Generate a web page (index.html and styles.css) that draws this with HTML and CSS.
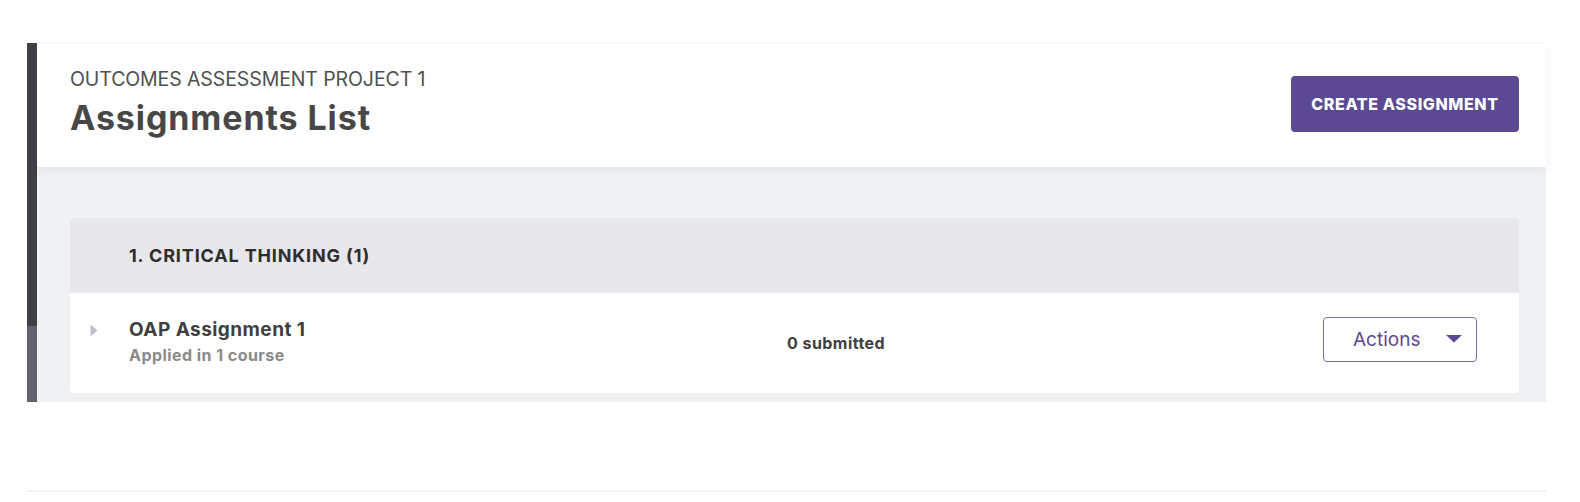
FILE: index.html
```html
<!DOCTYPE html>
<html lang="en">
<head>
<meta charset="utf-8">
<title>Assignments List</title>
<link rel="stylesheet" href="styles.css">
</head>
<body>
<div class="frame">
  <div class="rail">
    <div class="rail-top"></div>
    <div class="rail-bottom"></div>
  </div>
  <div class="main">
    <header class="page-header">
      <div class="titles">
        <div class="eyebrow">OUTCOMES ASSESSMENT PROJECT 1</div>
        <h1 class="title">Assignments List</h1>
      </div>
      <button class="btn-primary">CREATE ASSIGNMENT</button>
    </header>
    <section class="content">
      <div class="group">
        <div class="group-head">1. CRITICAL THINKING (1)</div>
        <div class="row">
          <div class="caret">
            <svg width="8" height="13" viewBox="0 0 8 13"><path d="M0.5 0.5 L7.5 6.5 L0.5 12.5 Z" fill="#b9c1cc"/></svg>
          </div>
          <div class="row-main">
            <div class="row-title">OAP Assignment 1</div>
            <div class="row-sub">Applied in 1 course</div>
          </div>
          <div class="row-count">0 submitted</div>
          <div class="row-actions">
            <button class="btn-actions">
              <span>Actions</span>
              <svg width="16" height="8" viewBox="0 0 16 8"><path d="M0 0 H16 L8 7.5 Z" fill="#5b4a91"/></svg>
            </button>
          </div>
        </div>
      </div>
    </section>
  </div>
</div>
<div class="footer-line"></div>
</body>
</html>
```

FILE: styles.css
```css
* { box-sizing: border-box; }

html, body {
  margin: 0;
  padding: 0;
  background: #ffffff;
  font-family: "Inter", "Noto Sans", "Liberation Sans", sans-serif;
  color: #444;
}

body {
  padding: 43px 34px 0 27px;
}

.frame {
  display: flex;
  height: 359px;
}

.rail {
  width: 10px;
  flex: none;
  display: flex;
  flex-direction: column;
}

.rail-top {
  height: 283px;
  background: #404046;
}

.rail-bottom {
  flex: 1;
  background: #62626f;
}

.main {
  flex: 1;
  display: flex;
  flex-direction: column;
  background: #f0f1f3;
}

.page-header {
  position: relative;
  z-index: 1;
  height: 124px;
  background: #ffffff;
  border-top: 1px solid #f4f4f5;
  box-shadow: 0 3px 10px rgba(0, 0, 0, 0.06);
  display: flex;
  align-items: center;
  justify-content: space-between;
  padding: 0 27px 0 33px;
}

.titles {
  display: flex;
  flex-direction: column;
  margin-top: -6px;
}

.eyebrow {
  font-size: 19.5px;
  line-height: 22px;
  color: #505050;
  letter-spacing: -0.1px;
}

.title {
  margin: 9px 0 0;
  font-size: 34px;
  line-height: 38px;
  font-weight: 700;
  letter-spacing: 0.9px;
  color: #474747;
}

.btn-primary {
  width: 228px;
  height: 56px;
  margin-top: -4px;
  background: #5b4a91;
  color: #ffffff;
  border: none;
  border-radius: 4px;
  font-family: "Inter", "Liberation Sans", sans-serif;
  font-size: 16px;
  font-weight: 800;
  letter-spacing: 0.6px;
}

.content {
  flex: 1;
  padding: 51px 27px 9px 33px;
}

.group {
  border-radius: 4px;
  overflow: hidden;
}

.group-head {
  height: 75px;
  background: #e8e7eb;
  display: flex;
  align-items: center;
  padding-left: 59px;
  font-size: 18px;
  font-weight: 700;
  letter-spacing: 0.85px;
  color: #2e2e2e;
}

.row {
  height: 100px;
  background: #ffffff;
  display: flex;
  align-items: center;
}

.caret {
  width: 59px;
  flex: none;
  padding-left: 20px;
  display: flex;
  align-items: center;
  margin-top: -25px;
}

.caret svg { display: block; }

.row-main {
  width: 658px;
  flex: none;
  display: flex;
  flex-direction: column;
  margin-top: -3px;
}

.row-title {
  font-size: 19px;
  line-height: 24px;
  font-weight: 700;
  letter-spacing: 0.45px;
  color: #3f3f3f;
}

.row-sub {
  font-size: 16px;
  line-height: 20px;
  font-weight: 700;
  letter-spacing: 0.45px;
  color: #8a8a8a;
  margin-top: 3px;
}

.row-count {
  flex: none;
  font-size: 16px;
  font-weight: 700;
  letter-spacing: 0.45px;
  color: #3f3f3f;
}

.row-actions {
  flex: 1;
  display: flex;
  justify-content: flex-end;
  padding-right: 42px;
}

.btn-actions {
  width: 154px;
  height: 45px;
  margin-top: -8px;
  background: #ffffff;
  border: 1.5px solid #7d6db0;
  border-radius: 4px;
  display: flex;
  align-items: center;
  justify-content: space-between;
  padding: 0 14px 0 29px;
  font-family: "Inter", "Liberation Sans", sans-serif;
  font-size: 19px;
  color: #5b4a91;
}

.btn-actions svg { display: block; }

.footer-line {
  height: 2px;
  margin-top: 88px;
  background: #f1f1f2;
}
```
